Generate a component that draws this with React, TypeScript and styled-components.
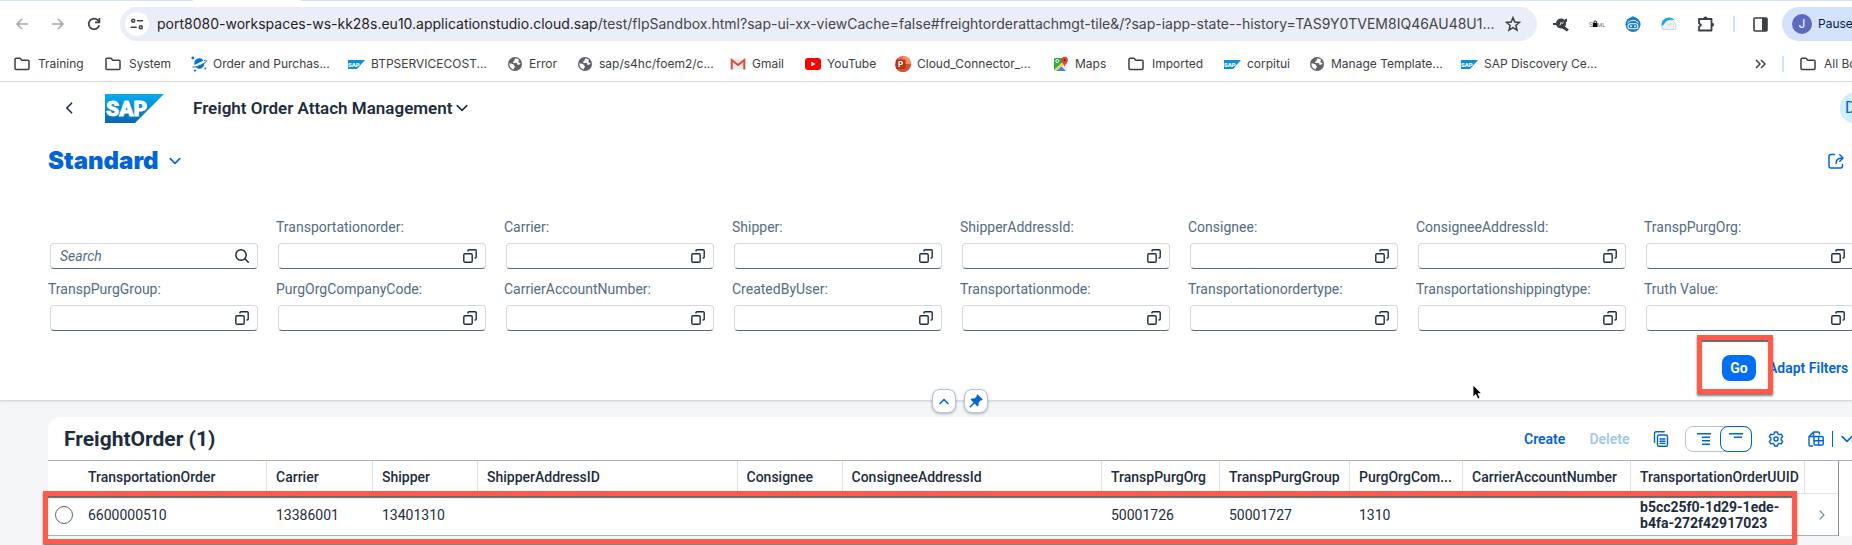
import React from 'react';
import styled, { createGlobalStyle } from 'styled-components';

const uiFont = 'Roboto, "Noto Sans", "Liberation Sans", sans-serif';
const chromeFont = 'Inter, "Liberation Sans", sans-serif';
const ink = '#1d2d3e';
const blue = '#0064d9';
const alertRed = '#ff5a4a';

const GlobalStyle = createGlobalStyle`
  * { box-sizing: border-box; }
  html { overflow: hidden; background: #f5f6f7; }
  body { margin: 0; font: 14px/20px ${uiFont}; color: ${ink}; }
  button, input { font: inherit; color: inherit; }
  svg { display: block; flex: none; }
`;

const IconButton = styled.button`
  display: flex;
  align-items: center;
  justify-content: center;
  flex: none;
  padding: 0;
  border: 0;
  background: none;
  color: inherit;
`;

/* Browser chrome */

const Page = styled.div`
  overflow: hidden;
`;

const TabStrip = styled.div`
  height: 1px;
  padding-left: 193px;
  background: #d3e3fd;
`;

const ActiveTab = styled.div`
  width: 108px;
  height: 1px;
  background: #fff;
`;

const ChromeBar = styled.div`
  display: flex;
  align-items: center;
  height: 46px;
  padding-left: 10px;
  background: #fff;
  color: #3c4043;
  font-family: ${chromeFont};
  overflow: hidden;
`;

const NavButton = styled(IconButton)<{ $dim?: boolean }>`
  width: 24px;
  height: 24px;
  margin-right: 12px;
  color: ${p => (p.$dim ? '#a6a8ab' : '#3c4043')};
`;

const Omnibox = styled.div`
  display: flex;
  align-items: center;
  flex: 1;
  min-width: 0;
  height: 34px;
  margin-left: 2px;
  padding: 0 16px 0 5px;
  border-radius: 17px;
  background: #ebedf8;
`;

const SiteInfo = styled(IconButton)`
  width: 24px;
  height: 24px;
  border-radius: 12px;
  background: #fff;
`;

const Url = styled.div`
  flex: 1;
  min-width: 0;
  margin: 0 8px;
  overflow: hidden;
  white-space: nowrap;
  color: #44474a;
  font-size: 14px;
`;

const UrlHost = styled.span`
  color: #1f1f1f;
`;

const Extensions = styled.div`
  display: flex;
  align-items: center;
  flex: none;
  gap: 20px;
  margin-left: 16px;
`;

const Divider = styled.span`
  flex: none;
  width: 2px;
  height: 16px;
  background: #d3e3fd;
`;

const PanelTools = styled.div`
  display: flex;
  align-items: center;
  flex: none;
  width: 119px;
  gap: 18px;
  margin-left: 18px;
`;

const Profile = styled.button`
  display: flex;
  align-items: center;
  gap: 6px;
  flex: none;
  width: 120px;
  height: 34px;
  padding: 0 10px;
  margin-left: -4px;
  border: 0;
  border-radius: 17px;
  background: #d3e3fd;
  color: #041e49;
  font-size: 12px;
`;

const ProfileBadge = styled.span`
  width: 20px;
  border-radius: 10px;
  background: #5c6bc0;
  color: #fff;
  font-size: 12px;
  line-height: 20px;
  text-align: center;
`;

const BookmarkBar = styled.nav`
  display: flex;
  align-items: center;
  height: 35px;
  padding-left: 14px;
  border-bottom: 1px solid #dcdee1;
  background: #fff;
  font-family: ${chromeFont};
  font-size: 12px;
  overflow: hidden;
`;

const Bookmark = styled.a<{ $width: number; $folder?: boolean }>`
  display: flex;
  align-items: center;
  flex: none;
  gap: ${p => (p.$folder ? 8 : 6)}px;
  width: ${p => p.$width}px;
  color: #3c4043;
  text-decoration: none;
  white-space: nowrap;
`;

const BookmarkEnd = styled.div`
  display: flex;
  align-items: center;
  flex: none;
  gap: 16px;
  width: 97px;
  margin-left: auto;
`;

/* Application shell */

const ShellPanel = styled.section`
  position: relative;
  padding-left: 48px;
  border-bottom: 1px solid #d9dbdd;
  background: #fff;
  box-shadow: 0 1px 2px rgba(34, 54, 73, 0.1);
`;

const ShellHeader = styled.header`
  display: flex;
  align-items: center;
  height: 52px;
  padding-left: 14px;
`;

const Logo = styled.svg`
  margin: 0 29px 0 27px;
`;

const AppTitle = styled.button`
  display: flex;
  align-items: center;
  gap: 4px;
  padding: 0;
  border: 0;
  background: none;
  font-size: 17px;
  font-weight: 600;
`;

const Avatar = styled.button`
  flex: none;
  width: 32px;
  height: 32px;
  margin: 0 -20px 0 auto;
  padding: 0 0 0 5px;
  border: 0;
  border-radius: 16px;
  background: #d1efff;
  color: ${blue};
  font-size: 16px;
  text-align: left;
`;

const VariantRow = styled.div`
  display: flex;
  align-items: center;
  justify-content: space-between;
  height: 53px;
  margin-bottom: 30px;
  padding-right: 8px;
  color: ${blue};
`;

const Variant = styled.h1`
  display: flex;
  align-items: center;
  gap: 10px;
  margin: 0;
  font: 900 24px/32px ${chromeFont};
`;

const FilterGrid = styled.form`
  display: grid;
  grid-template-columns: repeat(8, minmax(0, 1fr));
  gap: 10px 20px;
`;

const Field = styled.div`
  display: flex;
  flex-direction: column;
  justify-content: flex-end;
  gap: 6px;
`;

const FieldLabel = styled.label`
  color: #556b82;
  white-space: nowrap;
`;

const FieldBox = styled.div`
  display: flex;
  align-items: center;
  height: 26px;
  margin: 0 -2px 0 2px;
  padding-right: 8px;
  border: 1px solid #d5d9de;
  border-bottom-color: #556b82;
  border-radius: 4px;
  background: #fff;
`;

const FieldInput = styled.input`
  flex: 1;
  min-width: 0;
  height: 22px;
  padding: 0 9px;
  border: 0;
  outline: 0;
  background: none;
  &::placeholder {
    color: #556b82;
    font-style: italic;
    opacity: 1;
  }
`;

const FilterActions = styled.div`
  display: flex;
  justify-content: flex-end;
  align-items: flex-start;
  gap: 12px;
  height: 69px;
  padding: 24px 7px 0 0;
`;

const GoSlot = styled.div`
  position: relative;
`;

const GoButton = styled.button`
  display: block;
  width: 34px;
  height: 26px;
  padding: 0;
  border: 0;
  border-radius: 8px;
  background: #0070f2;
  color: #fff;
  font-weight: 700;
`;

const TextButton = styled.button<{ $width: number; $faded?: boolean }>`
  width: ${p => p.$width}px;
  height: 26px;
  padding: 0;
  border: 0;
  background: none;
  color: ${p => (p.$faded ? '#a3c5ef' : blue)};
  font-weight: 600;
  white-space: nowrap;
`;

const Callout = styled.div`
  position: absolute;
  z-index: 2;
  border: 5px solid ${alertRed};
  box-shadow: 0 2px 2px rgba(0, 0, 0, 0.5), inset 0 2px 1px rgba(0, 0, 0, 0.6);
  pointer-events: none;
`;

const GoCallout = styled(Callout)`
  top: -20px;
  left: -25px;
  width: 76px;
  height: 59px;
`;

const RowCallout = styled(Callout)`
  top: 30px;
  left: -5px;
  right: 55px;
  height: 53px;
`;

const Pointer = styled.svg`
  position: absolute;
  right: 368px;
  bottom: -1px;
`;

const SnapButtons = styled.div`
  position: absolute;
  left: 68px;
  right: 0;
  bottom: -13px;
  display: flex;
  justify-content: center;
  gap: 8px;
`;

const SnapButton = styled(IconButton)`
  width: 24px;
  height: 24px;
  border: 1px solid #bcc3ca;
  border-radius: 8px;
  background: #fff;
  color: ${blue};
  box-shadow: 0 1px 3px rgba(34, 54, 73, 0.35);
`;

/* Result table */

const Card = styled.section`
  margin: 16px 0 9px 48px;
  border-radius: 12px 0 0 0;
  background: #fff;
`;

const CardHeader = styled.div`
  display: flex;
  align-items: center;
  justify-content: space-between;
  height: 43px;
  padding-left: 16px;
`;

const CardTitle = styled.h2`
  margin: 0;
  font-size: 21px;
  line-height: 24px;
  font-weight: 700;
`;

const TableTools = styled.div`
  display: flex;
  align-items: center;
  margin-right: -1px;
  color: ${blue};
`;

const TextTools = styled.div`
  display: flex;
  gap: 24px;
  margin-right: 23px;
`;

const Segments = styled.div`
  display: flex;
  height: 26px;
  margin: 0 16px;
  border: 1px solid #bcc3ca;
  border-radius: 8px;
`;

const Segment = styled(IconButton)<{ $on?: boolean }>`
  width: ${p => (p.$on ? 32 : 35)}px;
  height: 26px;
  margin: -1px -1px 0 0;
  border: ${p => (p.$on ? `1px solid ${blue}` : '0')};
  border-radius: 8px;
`;

const ExportGroup = styled.div`
  display: flex;
  align-items: center;
  gap: 8px;
  margin-left: 24px;
`;

const ExportDivider = styled.span`
  width: 1px;
  height: 16px;
  background: ${blue};
`;

const TableWrap = styled.div`
  position: relative;
  border-top: 1px solid #a8b3bf;
`;

const TableScroll = styled.div`
  margin-right: 13px;
  border-right: 1px solid #8a8d91;
`;

const Table = styled.table`
  width: 100%;
  table-layout: fixed;
  border-collapse: separate;
  border-spacing: 0;
`;

const HeadCell = styled.th<{ $plain?: boolean }>`
  height: 33px;
  padding: 0 3px 0 9px;
  border-right: 1px solid ${p => (p.$plain ? 'transparent' : '#e0e2e5')};
  border-bottom: 1px solid #e0e2e5;
  font-weight: 500;
  text-align: left;
  white-space: nowrap;
`;

const Cell = styled.td<{ $strong?: boolean }>`
  height: 42px;
  padding: 0 8px 0 9px;
  border-bottom: 1px solid #a8b3bf;
  font-weight: ${p => (p.$strong ? 700 : 400)};
  line-height: 16px;
`;

const SelectCell = styled(Cell)`
  padding: 0 0 0 7px;
`;

const NavCell = styled(Cell)`
  padding: 0 0 0 12px;
  color: #788fa6;
`;

const RowRadio = styled.input`
  display: block;
  appearance: none;
  width: 18px;
  height: 18px;
  margin: 0;
  border: 1px solid #556b82;
  border-radius: 9px;
  background: #fff;
`;

/* Icons */

const stroke = { fill: 'none', stroke: 'currentColor', strokeLinecap: 'round', strokeLinejoin: 'round' } as const;

const Chevron = ({ dir, size = 10, weight = 1.5 }: { dir: 'up' | 'down' | 'left' | 'right'; size?: number; weight?: number }) => {
  const d = { up: 'M1 7.5 5 3.5l4 4', down: 'M1 3l4 4 4-4', left: 'M6 2 3 5l3 3', right: 'M3 1l4 4-4 4' }[dir];
  return (
    <svg width={size} height={size} viewBox="0 0 10 10" {...stroke} strokeWidth={weight}>
      <path d={d} />
    </svg>
  );
};

const ArrowIcon = ({ flip }: { flip?: boolean }) => (
  <svg width="14" height="14" viewBox="0 0 14 14" fill="none" stroke="currentColor" strokeWidth="1.6">
    <path d={flip ? 'M1 7h11M7 2l5 5-5 5' : 'M13 7H2M7 2 2 7l5 5'} />
  </svg>
);

const ReloadIcon = () => (
  <svg width="14" height="14" viewBox="0 0 14 14" fill="none" stroke="currentColor" strokeWidth="1.7">
    <path d="M12.2 8.2A5.3 5.3 0 1 1 11 3.4l1.3 1.5" />
    <path d="M12.4 1v4.4H8" />
  </svg>
);

const TuneIcon = () => (
  <svg width="14" height="14" viewBox="0 0 14 14" {...stroke} strokeWidth="1.5">
    <circle cx="3.2" cy="3.8" r="1.5" />
    <path d="M7.5 3.8h5M1.2 10.2h5" />
    <circle cx="10.8" cy="10.2" r="1.5" />
  </svg>
);

const StarIcon = () => (
  <svg width="16" height="16" viewBox="0 0 16 16" fill="none" stroke="#3c4043" strokeWidth="1.5">
    <path d="M8 1.6 9.8 6l4.7.4-3.6 3.1 1.1 4.6L8 11.6 4 14.1l1.1-4.6L1.5 6.4 6.2 6z" />
  </svg>
);

const FolderIcon = () => (
  <svg width="16" height="14" viewBox="0 0 16 14" {...stroke} strokeWidth="1.5">
    <path d="M1 2.2Q1 1.2 2 1.2h4l1.8 2H14q1 0 1 1v7.4q0 1-1 1H2q-1 0-1-1z" />
  </svg>
);

const GlobeIcon = () => (
  <svg width="16" height="16" viewBox="0 0 16 16">
    <circle cx="8" cy="8" r="7" fill="#5f6368" />
    <path d="M8.8 2.2C7 3 8.6 4 7 5c-1 .6-1.2 1.2-.5 2h2.7c1 0 1.3 1 1.3 2 1.5 0 2.800-.6 3-1.700-.6-.5-1.600-.2-1.900-1C11 5 12.500 4.600 11.800 3.600z" fill="#fff" />
    <path d="M2.300 7.500c1.600-.2 4.200.3 4.500 1.500.2.900 1.200.5 1.200 1.500 0 1-1.400 1-1.300 3C4 12.800 2.300 10.700 2.300 7.500z" fill="#fff" />
  </svg>
);

const SapMini = () => (
  <svg width="17" height="9" viewBox="0 0 17 9">
    <path d="M0 0h17L9 9H0z" fill="#0a8fdc" />
    <text x="0" y="7" fill="#fff" fontFamily="Roboto" fontWeight="900" fontSize="6">SAP</text>
  </svg>
);

const PlanetIcon = () => (
  <svg width="16" height="16" viewBox="0 0 16 16" fill="#0a6ed1">
    <path d="M3.300 7.200a5 5 0 0 1 9.200-2.700L3.500 9z" />
    <path d="M5 11.500 13.200 7.500a5 5 0 0 1-8.200 4z" />
    <path d="M13 4.500c3.500-.8 3 1.200 0 2.800C9.500 9.300 4.500 11.400 1.500 11.200" fill="none" stroke="#0a6ed1" strokeWidth="1" />
    <circle cx="1.800" cy="2" r="1.400" /><circle cx="4" cy="14.500" r="1.100" /><circle cx="14.300" cy="12.500" r=".9" />
  </svg>
);

const GmailIcon = () => (
  <svg width="16" height="16" viewBox="0 0 16 16">
    <path d="M1 3h14v10.500H1z" fill="#e8eaed" />
    <path d="M1.700 13.500V4l6.300 5 6.300-5v9.500" fill="none" stroke="#e0483b" strokeWidth="2" />
  </svg>
);

const YouTubeIcon = () => (
  <svg width="16" height="12" viewBox="0 0 16 12">
    <rect width="16" height="12" rx="3" fill="#f00" />
    <path d="M6.300 3.500 10.500 6l-4.200 2.500z" fill="#fff" />
  </svg>
);

const PowerPointIcon = () => (
  <svg width="16" height="16" viewBox="0 0 16 16">
    <circle cx="8" cy="8" r="8" fill="#ed6c47" />
    <path d="M8 0a8 8 0 0 1 8 8H8z" fill="#ff8f6b" />
    <path d="M0 8h16A8 8 0 0 1 0 8z" fill="#d35230" />
    <rect x="1" y="3.500" width="9.500" height="9.500" rx="1" fill="#b7331a" />
    <text x="3" y="11" fill="#fff" fontFamily="Inter" fontWeight="700" fontSize="8">P</text>
  </svg>
);

const MapsIcon = () => (
  <svg width="16" height="16" viewBox="0 0 16 16">
    <rect x="1" y="2" width="13" height="13" rx="1.500" fill="#e8eaed" />
    <path d="M1 14V3.500Q1 2 2.500 2H10v4.500z" fill="#34a853" />
    <path d="M3 15l5-5 5 5z" fill="#4285f4" />
    <path d="M1 14 9 6.500l2 2L3 15H2z" fill="#fbd24c" />
    <circle cx="4.300" cy="5" r="1.500" fill="none" stroke="#fff" />
    <path d="M11.500 11C11 8 8.500 7 8.500 4a3.200 3.200 0 0 1 6.400 0c0 3-2.900 4-3.400 7z" fill="#ea4335" />
    <circle cx="11.700" cy="4" r="1.100" fill="#8c1c13" />
  </svg>
);

const PlugIcon = () => (
  <svg width="16" height="16" viewBox="0 0 16 16" fill="#3c4043">
    <circle cx="8" cy="7.500" r="5" />
    <path d="M0 7h4v2H0zM10 9l5.800 4.500-1.800 2L8.500 12zM11.500 3.500l2.500-1v3l-1.500 1z" />
    <path d="m7 9.500.8-3 1.700 1 1-1.800" stroke="#fff" strokeWidth=".8" fill="none" />
  </svg>
);

const SamlIcon = () => (
  <svg width="16" height="10" viewBox="0 0 16 10">
    <text x="0" y="8" fill="#777" fontFamily="Roboto" fontSize="7">S</text>
    <rect x="4" y="4" width="4.500" height="4" fill="#000" />
    <path d="M5 4.500V3.200a1.200 1.200 0 0 1 2.500 0v1.300" fill="none" stroke="#000" />
    <text x="8" y="8" fill="#777" fontFamily="Roboto" fontSize="6">ML</text>
  </svg>
);

const NinjaIcon = () => (
  <svg width="16" height="16" viewBox="0 0 16 16">
    <circle cx="8" cy="8.500" r="7.500" fill="#1479cf" />
    <circle cx="8" cy="1.800" r="1.600" fill="#1479cf" />
    <path d="M2.300 7Q8 1.500 13.700 7" fill="none" stroke="#fff" strokeWidth=".9" />
    <rect x="3" y="7.800" width="10" height="5" rx="2.500" fill="#1479cf" stroke="#fff" strokeWidth="1.100" />
    <circle cx="6" cy="10.300" r="1" fill="#fff" /><circle cx="10" cy="10.300" r="1" fill="#fff" />
  </svg>
);

const HelmetIcon = () => (
  <svg width="16" height="16" viewBox="0 0 16 16">
    <path d="M1.500 13.500a7 7 0 1 1 13 0z" fill="#f1f2f3" stroke="#c9ccd0" strokeWidth=".8" />
    <path d="M.6 10A7.500 7.500 0 0 1 14 4.500C9.500 2.500 4.500 4.500 3 8.500z" fill="#1ea7e4" />
    <path d="M6 7l2 3 2.500-3M12 8l1 3" fill="none" stroke="#c9ccd0" strokeWidth=".8" />
  </svg>
);

const PuzzleIcon = () => (
  <svg width="18" height="18" viewBox="0 0 18 18">
    <path d="M2 4h12.500v11.500H2v-3.700l2-1.800-2-1.800z" fill="none" stroke="#3c4043" strokeWidth="1.800" strokeLinejoin="round" />
    <path d="M6.500 3.500a2 2 0 0 1 4 0zM15 7.800a2 2 0 0 1 0 4z" fill="#3c4043" />
  </svg>
);

const SidePanelIcon = () => (
  <svg width="15" height="15" viewBox="0 0 15 15">
    <rect x="1" y="1" width="13" height="13" rx="1" fill="none" stroke="#3c4043" strokeWidth="1.600" />
    <path d="M9 1h5v13H9z" fill="#3c4043" />
  </svg>
);

const MoreIcon = () => (
  <svg width="11" height="10" viewBox="0 0 11 10" fill="none" stroke="#3c4043" strokeWidth="1.500">
    <path d="m1 1 4 4-4 4M6 1l4 4-4 4" />
  </svg>
);

const ShareIcon = () => (
  <svg width="16" height="16" viewBox="0 0 16 16" {...stroke} strokeWidth="1.500">
    <path d="M6.500 1.500H3Q1 1.500 1 3.500V13q0 2 2 2h9.500q2 0 2-2v-1.500" />
    <path d="M8 10.500c0-4 2-5.500 6.500-5.500M11.800 1.800 15 5l-3.200 3.200" />
  </svg>
);

const SearchIcon = () => (
  <svg width="14" height="14" viewBox="0 0 14 14" {...stroke} strokeWidth="1.500">
    <circle cx="6" cy="6" r="5.200" />
    <path d="m9.800 9.800 3.500 3.500" />
  </svg>
);

const ValueHelpIcon = () => (
  <svg width="14" height="14" viewBox="0 0 14 14" {...stroke} strokeWidth="1.400">
    <rect x=".8" y="4.800" width="8.400" height="8.400" rx="1.200" />
    <path d="M5 2V1.800q0-1 1-1h6.200q1 0 1 1V8q0 1-1 1H12" />
  </svg>
);

const PinIcon = () => (
  <svg width="14" height="14" viewBox="0 0 14 14" fill="currentColor">
    <path d="M8.500.3 13.700 5.500l-1 .9-.9-.2-2.300 2.500.1 2.700-1.200 1.100L5.600 9.600 1.300 13.700l-1-.9L4.500 8.400 1.600 5.600l1-1.100 2.900.1 2.300-2.300-.2-1z" />
  </svg>
);

const CopyIcon = () => (
  <svg width="16" height="16" viewBox="0 0 16 16" {...stroke} strokeWidth="1.400">
    <rect x="4.500" y="4" width="10" height="11.200" rx="1.500" />
    <path d="M1.500 11.500V2.500q0-1.700 1.700-1.700h8M7 8h5M7 10.200h5M7 12.400h5" />
  </svg>
);

const ExpandIcon = () => (
  <svg width="16" height="14" viewBox="0 0 16 14" fill="none" stroke="currentColor" strokeWidth="1.500">
    <path d="M1 1.800h14M6 5.300h8M6 8.800h8M6 12.300h8" />
  </svg>
);

const CollapseIcon = () => (
  <svg width="16" height="14" viewBox="0 0 16 14" fill="none" stroke="currentColor" strokeWidth="1.500">
    <path d="M1 1.800h14M6 5.300h8" />
  </svg>
);

const GearIcon = () => (
  <svg width="16" height="16" viewBox="0 0 16 16" {...stroke} strokeWidth="1.400">
    <path d="M6.600 1h2.800l.5 2 1.300.7 2-.6 1.500 2.500-1.500 1.500v1.800l1.500 1.500-1.500 2.500-2-.6-1.300.7-.5 2H6.600l-.5-2-1.300-.7-2 .6-1.500-2.500 1.500-1.500V7.100L1.300 5.600l1.500-2.500 2 .6L6.100 3z" />
    <circle cx="8" cy="8" r="2" />
  </svg>
);

const ExportIcon = () => (
  <svg width="16" height="16" viewBox="0 0 16 16" {...stroke} strokeWidth="1.400">
    <path d="M11.500 3V2q0-1-1-1H5.500L1 5.500V14q0 1 1 1h2.500M5.500 1v4.500H1" />
    <rect x="6" y="5.500" width="9.200" height="8.500" rx="1" />
    <path d="M6 9.800h9M10.600 5.500V14" />
  </svg>
);

/* Data */

type BookmarkData = { text: string; width: number; icon: React.ReactNode; folder?: boolean };

const bookmarks: BookmarkData[] = [
  { text: 'Training', width: 91, icon: <FolderIcon />, folder: true },
  { text: 'System', width: 86, icon: <FolderIcon />, folder: true },
  { text: 'Order and Purchas...', width: 157, icon: <PlanetIcon /> },
  { text: 'BTPSERVICECOST...', width: 159, icon: <SapMini /> },
  { text: 'Error', width: 70, icon: <GlobeIcon /> },
  { text: 'sap/s4hc/foem2/c...', width: 153, icon: <GlobeIcon /> },
  { text: 'Gmail', width: 75, icon: <GmailIcon /> },
  { text: 'YouTube', width: 90, icon: <YouTubeIcon /> },
  { text: 'Cloud_Connector_...', width: 158, icon: <PowerPointIcon /> },
  { text: 'Maps', width: 75, icon: <MapsIcon /> },
  { text: 'Imported', width: 96, icon: <FolderIcon />, folder: true },
  { text: 'corpitui', width: 85, icon: <SapMini /> },
  { text: 'Manage Template...', width: 152, icon: <GlobeIcon /> },
  { text: 'SAP Discovery Ce...', width: 140, icon: <SapMini /> },
];

const filters = [
  'Transportationorder', 'Carrier', 'Shipper', 'ShipperAddressId', 'Consignee', 'ConsigneeAddressId', 'TranspPurgOrg',
  'TranspPurgGroup', 'PurgOrgCompanyCode', 'CarrierAccountNumber', 'CreatedByUser', 'Transportationmode',
  'Transportationordertype', 'Transportationshippingtype', 'Truth Value',
];

/* The two address columns carry no width and share what is left over. */
const columns: { name: string; width?: number; value: string; strong?: boolean }[] = [
  { name: 'TransportationOrder', width: 188, value: '6600000510' },
  { name: 'Carrier', width: 106, value: '13386001' },
  { name: 'Shipper', width: 105, value: '13401310' },
  { name: 'ShipperAddressID', value: '' },
  { name: 'Consignee', width: 105, value: '' },
  { name: 'ConsigneeAddressId', value: '' },
  { name: 'TranspPurgOrg', width: 118, value: '50001726' },
  { name: 'TranspPurgGroup', width: 130, value: '50001727' },
  { name: 'PurgOrgCom...', width: 113, value: '1310' },
  { name: 'CarrierAccountNumber', width: 168, value: '' },
  { name: 'TransportationOrderUUID', width: 174, value: 'b5cc25f0-1d29-1ede-b4fa-272f42917023', strong: true },
];

export default function App() {
  return (
    <Page>
      <GlobalStyle />
      <TabStrip><ActiveTab /></TabStrip>
      <ChromeBar>
        <NavButton $dim aria-label="Back"><ArrowIcon /></NavButton>
        <NavButton $dim aria-label="Forward"><ArrowIcon flip /></NavButton>
        <NavButton aria-label="Reload"><ReloadIcon /></NavButton>
        <Omnibox>
          <SiteInfo aria-label="Site information"><TuneIcon /></SiteInfo>
          <Url>
            <UrlHost>port8080-workspaces-ws-kk28s.eu10.applicationstudio.cloud.sap</UrlHost>
            /test/flpSandbox.html?sap-ui-xx-viewCache=false#freightorderattachmgt-tile&amp;/?sap-iapp-state--history=TAS9Y0TVEM8IQ46AU48U1...
          </Url>
          <IconButton aria-label="Bookmark this page"><StarIcon /></IconButton>
        </Omnibox>
        <Extensions>
          <PlugIcon />
          <SamlIcon />
          <NinjaIcon />
          <HelmetIcon />
          <PuzzleIcon />
        </Extensions>
        <PanelTools>
          <Divider />
          <IconButton aria-label="Side panel"><SidePanelIcon /></IconButton>
          <Profile><ProfileBadge>J</ProfileBadge>Paused</Profile>
        </PanelTools>
      </ChromeBar>
      <BookmarkBar>
        {bookmarks.map(b => (
          <Bookmark key={b.text} href="#" $width={b.width} $folder={b.folder}>
            {b.icon}
            {b.text}
          </Bookmark>
        ))}
        <BookmarkEnd>
          <IconButton aria-label="More bookmarks"><MoreIcon /></IconButton>
          <Divider />
          <Bookmark href="#" $width={110} $folder><FolderIcon />All Bookmarks</Bookmark>
        </BookmarkEnd>
      </BookmarkBar>

      <ShellPanel>
        <ShellHeader>
          <IconButton aria-label="Navigate back"><Chevron dir="left" size={16} weight={1} /></IconButton>
          <Logo width="59" height="29" viewBox="0 0 59 29">
            <defs>
              <linearGradient id="sap" x1="0" y1="0" x2="0" y2="1">
                <stop offset="0" stopColor="#00aeef" />
                <stop offset="1" stopColor="#0a64b4" />
              </linearGradient>
            </defs>
            <path d="M0 0h59L30 29H0z" fill="url(#sap)" />
            <text x="1" y="22" fill="#fff" stroke="#fff" strokeWidth=".8" fontFamily="Roboto" fontWeight="900" fontSize="21">SAP</text>
          </Logo>
          <AppTitle>Freight Order Attach Management<Chevron dir="down" size={12} weight={1.3} /></AppTitle>
          <Avatar>D</Avatar>
        </ShellHeader>
        <VariantRow>
          <Variant>
            Standard
            <IconButton aria-label="Select view"><Chevron dir="down" size={12} weight={1.3} /></IconButton>
          </Variant>
          <IconButton aria-label="Share"><ShareIcon /></IconButton>
        </VariantRow>
        <FilterGrid onSubmit={e => e.preventDefault()}>
          <Field>
            <FieldBox>
              <FieldInput aria-label="Search" placeholder="Search" />
              <IconButton type="button" aria-label="Start search"><SearchIcon /></IconButton>
            </FieldBox>
          </Field>
          {filters.map(name => (
            <Field key={name}>
              <FieldLabel htmlFor={name}>{name}:</FieldLabel>
              <FieldBox>
                <FieldInput id={name} />
                <IconButton type="button" aria-label={`Choose ${name}`}><ValueHelpIcon /></IconButton>
              </FieldBox>
            </Field>
          ))}
        </FilterGrid>
        <FilterActions>
          <GoSlot>
            <GoButton>Go</GoButton>
            <GoCallout />
          </GoSlot>
          <TextButton $width={77}>Adapt Filters</TextButton>
        </FilterActions>
        <Pointer width="12" height="17" viewBox="0 0 12 17">
          <path d="M1 1v12l2.800-2.600 2 4.600 2.200-1-2-4.400h3.700z" fill="#000" stroke="#fff" strokeWidth=".8" />
        </Pointer>
        <SnapButtons>
          <SnapButton aria-label="Collapse header"><Chevron dir="up" /></SnapButton>
          <SnapButton aria-label="Pin header"><PinIcon /></SnapButton>
        </SnapButtons>
      </ShellPanel>

      <Card>
        <CardHeader>
          <CardTitle>FreightOrder (1)</CardTitle>
          <TableTools>
            <TextTools>
              <TextButton $width={41}>Create</TextButton>
              <TextButton $width={41} $faded disabled>Delete</TextButton>
            </TextTools>
            <IconButton aria-label="Copy"><CopyIcon /></IconButton>
            <Segments>
              <Segment aria-label="Expand"><ExpandIcon /></Segment>
              <Segment $on aria-label="Collapse"><CollapseIcon /></Segment>
            </Segments>
            <IconButton aria-label="Settings"><GearIcon /></IconButton>
            <ExportGroup>
              <IconButton aria-label="Export"><ExportIcon /></IconButton>
              <ExportDivider />
              <IconButton aria-label="Export options"><Chevron dir="down" size={12} weight={1.3} /></IconButton>
            </ExportGroup>
          </TableTools>
        </CardHeader>
        <TableWrap>
          <TableScroll>
            <Table>
              <colgroup>
                <col width={31} />
                {columns.map(c => <col key={c.name} width={c.width} />)}
                <col width={33} />
              </colgroup>
              <thead>
                <tr>
                  <HeadCell $plain aria-label="Selection" />
                  {columns.map(c => <HeadCell key={c.name}>{c.name}</HeadCell>)}
                  <HeadCell $plain aria-label="Navigation" />
                </tr>
              </thead>
              <tbody>
                <tr>
                  <SelectCell><RowRadio type="radio" name="row" aria-label="Select row 6600000510" /></SelectCell>
                  {columns.map(c => <Cell key={c.name} $strong={c.strong}>{c.value}</Cell>)}
                  <NavCell><Chevron dir="right" weight={1.2} /></NavCell>
                </tr>
              </tbody>
            </Table>
          </TableScroll>
          <RowCallout />
        </TableWrap>
      </Card>
    </Page>
  );
}
